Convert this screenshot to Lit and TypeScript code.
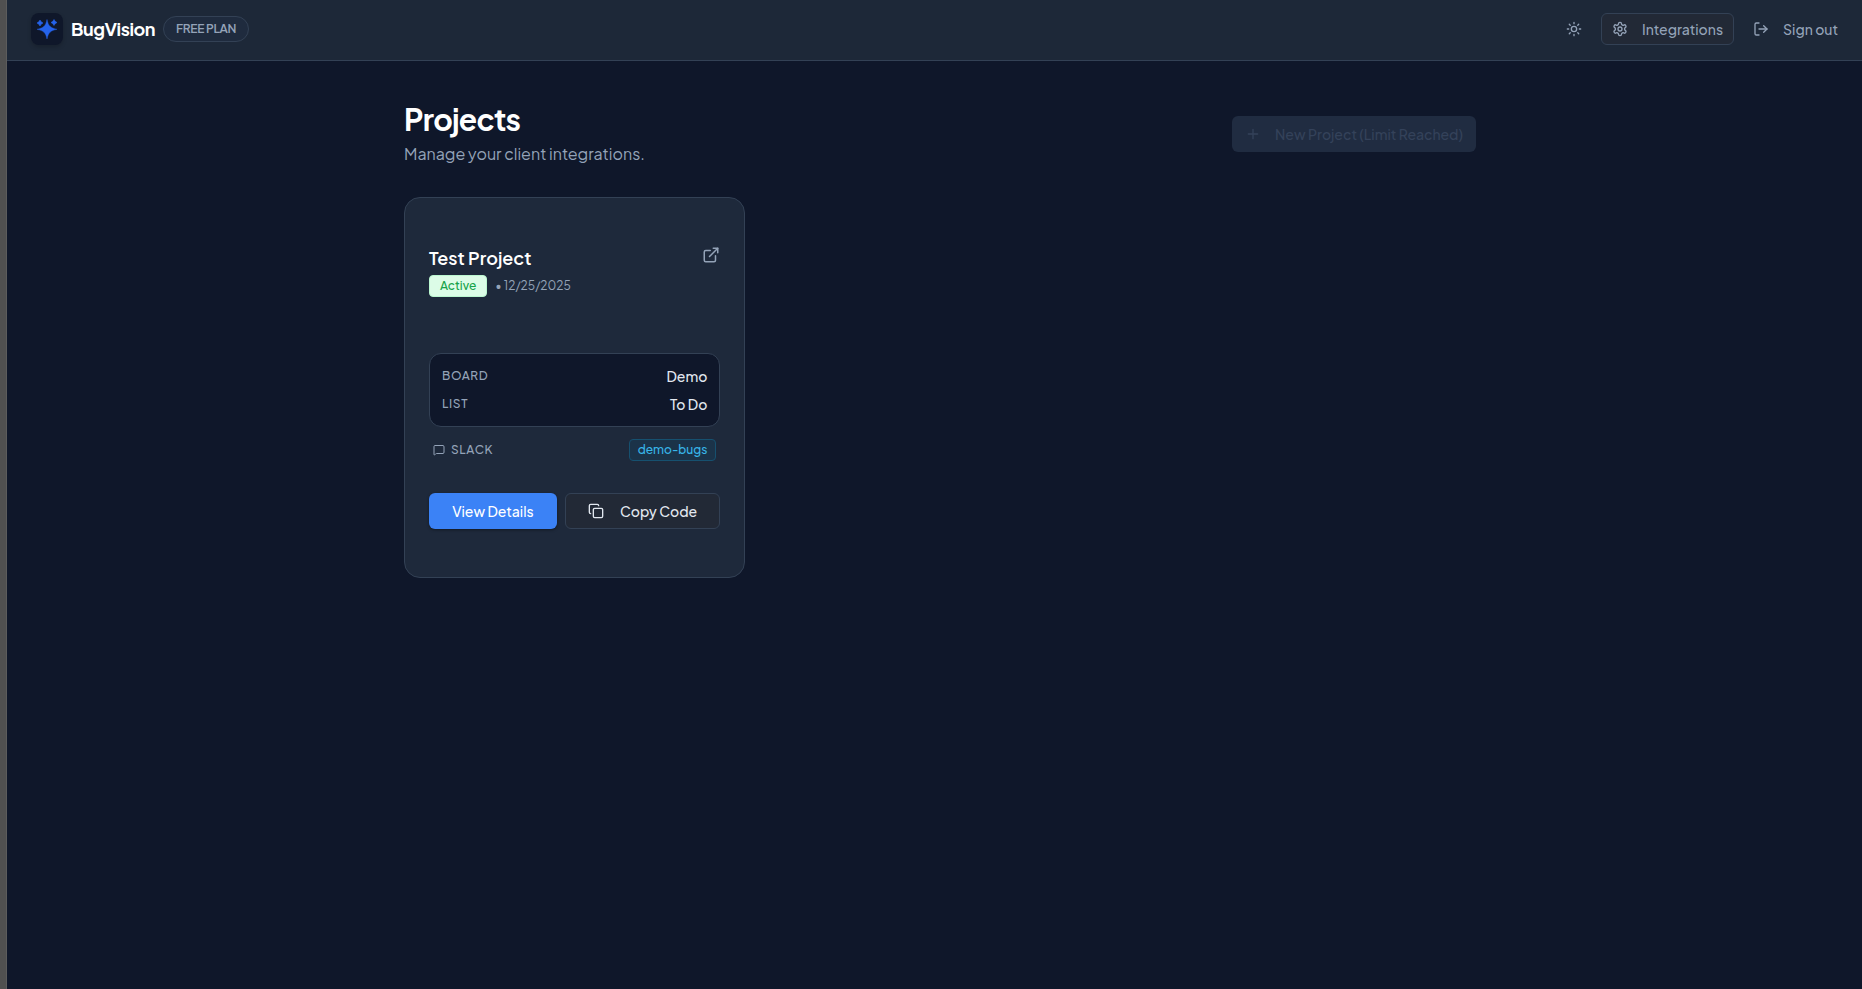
import { LitElement, html, css, svg } from "lit";
import { customElement, property } from "lit/decorators.js";

const glyphs = {
  sun: svg`<circle cx="12" cy="12" r="4"/><path d="M12 2v2M12 20v2M4.93 4.93l1.41 1.41M17.66 17.66l1.41 1.41M2 12h2M20 12h2M6.34 17.66l-1.41 1.41M19.07 4.93l-1.41 1.41"/>`,
  gear: svg`<circle cx="12" cy="12" r="3"/><path d="M12.22 2h-.44a2 2 0 0 0-2 2v.18a2 2 0 0 1-1 1.73l-.43.25a2 2 0 0 1-2 0l-.15-.08a2 2 0 0 0-2.73.73l-.22.38a2 2 0 0 0 .73 2.73l.15.1a2 2 0 0 1 1 1.72v.51a2 2 0 0 1-1 1.74l-.15.09a2 2 0 0 0-.73 2.73l.22.38a2 2 0 0 0 2.73.73l.15-.08a2 2 0 0 1 2 0l.43.25a2 2 0 0 1 1 1.73V20a2 2 0 0 0 2 2h.44a2 2 0 0 0 2-2v-.18a2 2 0 0 1 1-1.73l.43-.25a2 2 0 0 1 2 0l.15.08a2 2 0 0 0 2.73-.73l.22-.39a2 2 0 0 0-.73-2.73l-.15-.08a2 2 0 0 1-1-1.74v-.5a2 2 0 0 1 1-1.74l.15-.09a2 2 0 0 0 .73-2.73l-.22-.38a2 2 0 0 0-2.73-.73l-.15.08a2 2 0 0 1-2 0l-.43-.25a2 2 0 0 1-1-1.73V4a2 2 0 0 0-2-2z"/>`,
  exit: svg`<path d="M9 21H5a2 2 0 0 1-2-2V5a2 2 0 0 1 2-2h4"/><path d="m16 17 5-5-5-5"/><path d="M21 12H9"/>`,
  plus: svg`<path d="M5 12h14M12 5v14"/>`,
  external: svg`<path d="M15 3h6v6"/><path d="M10 14 21 3"/><path d="M18 13v6a2 2 0 0 1-2 2H5a2 2 0 0 1-2-2V8a2 2 0 0 1 2-2h6"/>`,
  message: svg`<path d="M22 17a2 2 0 0 1-2 2H6.828a2 2 0 0 0-1.414.586l-2.202 2.202A.71.71 0 0 1 2 21.286V5a2 2 0 0 1 2-2h16a2 2 0 0 1 2 2z"/>`,
  copy: svg`<rect x="8" y="8" width="14" height="14" rx="2"/><path d="M4 16c-1.1 0-2-.9-2-2V4c0-1.1.9-2 2-2h10c1.1 0 2 .9 2 2"/>`,
};

const icon = (name: keyof typeof glyphs, size = 16) => html`
  <svg width=${size} height=${size} viewBox="0 0 24 24" fill="none" stroke="currentColor"
    stroke-width="2" stroke-linecap="round" stroke-linejoin="round" aria-hidden="true">${glyphs[name]}</svg>`;

const shared = css`
  * { box-sizing: border-box; }
  h1, h2, p, dl, dd { margin: 0; }
  svg { display: block; flex: none; }
  .btn {
    display: inline-flex;
    align-items: center;
    justify-content: center;
    height: 36px;
    padding: 0 12px;
    border: 1px solid transparent;
    border-radius: 6px;
    background: transparent;
    color: #94a3b8;
    font: inherit;
    font-size: 14px;
    line-height: 20px;
    font-weight: 500;
    white-space: nowrap;
    cursor: pointer;
  }
`;

interface Project {
  name: string;
  status: string;
  created: string;
  board: string;
  list: string;
  channel: string;
}

@customElement("project-card")
export class ProjectCard extends LitElement {
  @property({ attribute: false }) project!: Project;

  static styles = [
    shared,
    css`
      :host { display: block; }
      .card {
        padding: 48px 24px;
        border: 1px solid #334155;
        border-radius: 16px;
        background: #1e293b;
      }
      .top { display: flex; justify-content: space-between; align-items: flex-start; }
      .name { margin-bottom: 5px; font-size: 18px; line-height: 24px; font-weight: 600; color: #fff; }
      .meta { display: flex; align-items: center; gap: 8px; font-size: 12px; line-height: 16px; color: #94a3b8; }
      .status {
        padding: 2px 10px;
        border: 1px solid #bbf7d0;
        border-radius: 4px;
        background: #dcfce7;
        color: #16a34a;
        font-weight: 500;
      }
      .open { color: #94a3b8; }
      .target {
        display: grid;
        gap: 8px;
        margin-top: 56px;
        padding: 12px;
        border: 1px solid #334155;
        border-radius: 12px;
        background: #0f172a;
      }
      .row { display: flex; justify-content: space-between; }
      .label {
        font-size: 12px;
        line-height: 20px;
        font-weight: 500;
        color: #94a3b8;
        text-transform: uppercase;
        letter-spacing: 0.05em;
      }
      .value { font-size: 14px; line-height: 20px; font-weight: 500; color: #e2e8f0; }
      .slack {
        display: flex;
        justify-content: space-between;
        align-items: center;
        margin-top: 12px;
        padding: 0 4px;
      }
      .source { display: flex; align-items: center; gap: 6px; }
      .channel {
        padding: 2px 8px;
        border: 1px solid #16506f;
        border-radius: 4px;
        background: #1b3349;
        color: #38b6ea;
        font-size: 12px;
        line-height: 16px;
        font-weight: 500;
      }
      .actions { display: flex; gap: 8px; margin-top: 32px; }
      .btn { flex: 1 1 auto; }
      .primary { background: #3b82f6; color: #fff; box-shadow: 0 1px 3px #0006; }
      .secondary { gap: 16px; border-color: #334155; background: #222936; color: #e2e8f0; }
    `,
  ];

  render() {
    const p = this.project;
    return html`
      <article class="card">
        <div class="top">
          <div>
            <h2 class="name">${p.name}</h2>
            <div class="meta"><span class="status">${p.status}</span><span>• ${p.created}</span></div>
          </div>
          <a class="open" href="#open" aria-label="Open project">${icon("external", 18)}</a>
        </div>
        <dl class="target">
          <div class="row"><dt class="label">Board</dt><dd class="value">${p.board}</dd></div>
          <div class="row"><dt class="label">List</dt><dd class="value">${p.list}</dd></div>
        </dl>
        <div class="slack">
          <span class="source label">${icon("message", 12)}Slack</span>
          <span class="channel">${p.channel}</span>
        </div>
        <div class="actions">
          <button class="btn primary" type="button">View Details</button>
          <button class="btn secondary" type="button">${icon("copy")}Copy Code</button>
        </div>
      </article>
    `;
  }
}

@customElement("app-root")
export class AppRoot extends LitElement {
  private projects: Project[] = [
    { name: "Test Project", status: "Active", created: "12/25/2025", board: "Demo", list: "To Do", channel: "demo-bugs" },
  ];

  static styles = [
    shared,
    css`
      :host {
        display: flex;
        min-height: 100vh;
        background: #0f172a;
        font-family: "Plus Jakarta Sans", Inter, sans-serif;
        color: #e2e8f0;
      }
      .edge { flex: none; width: 7px; background: #505050; border-right: 1px solid #5c5c5c; }
      .page { flex: 1; min-width: 0; }
      .header {
        display: flex;
        justify-content: space-between;
        align-items: flex-start;
        padding: 13px 13px 15px 24px;
        border-bottom: 1px solid #334155;
        background: #1d2838;
      }
      .brand, .nav { display: flex; align-items: center; gap: 8px; height: 32px; }
      .logo {
        display: grid;
        place-items: center;
        width: 32px;
        height: 32px;
        border-radius: 8px;
        background: #0f172a;
        box-shadow: 0 2px 4px #0003;
      }
      .title { font-size: 18px; line-height: 28px; font-weight: 700; letter-spacing: -0.025em; color: #fff; }
      .plan {
        padding: 4px 12px;
        border: 1px solid #334155;
        border-radius: 13px;
        color: #94a3b8;
        background: #1f2b3e;
        font-size: 12px;
        line-height: 16px;
        font-weight: 600;
        letter-spacing: -0.025em;
      }
      .nav .btn { height: 32px; gap: 14px; padding: 0 10px; }
      .nav .boxed { border-color: #334155; background: #222936; }
      .main { padding: 40px 0 40px 11px; }
      .container { max-width: 1120px; margin: 0 auto; padding: 0 24px; }
      .heading { display: flex; justify-content: space-between; align-items: center; margin-bottom: 31px; }
      .h1 { font-size: 30px; line-height: 36px; font-weight: 700; letter-spacing: -0.025em; color: #fff; }
      .sub { font-size: 16px; line-height: 24px; margin-top: 5px; color: #94a3b8; }
      .new { gap: 14px; background: #202c41; color: #34425a; cursor: not-allowed; }
      .grid { display: grid; grid-template-columns: repeat(3, minmax(0, 1fr)); gap: 24px; }
    `,
  ];

  render() {
    return html`
      <div class="edge"></div>
      <div class="page">
        <header class="header">
          <div class="brand">
            <span class="logo">
              <svg width="22" height="22" viewBox="0 0 22 22" fill="#2563eb" aria-hidden="true">
                <path d="M11 1.500C11.700 5 12.600 7 14 8.300C15.400 9.700 17.500 10.600 21 11.300C17.500 12 15.400 12.900 14 14.300C12.600 15.700 11.700 17.600 11 21C10.300 17.600 9.400 15.700 8 14.300C6.600 12.900 4.500 12 1 11.300C4.500 10.600 6.600 9.700 8 8.300C9.400 7 10.300 5 11 1.500Z" stroke="#2563eb" stroke-width=".4"/>
                <path d="M4 2Q4.800 4.200 7 5Q4.800 5.800 4 8Q3.200 5.800 1 5Q3.200 4.200 4 2Z" stroke="#2563eb" stroke-width=".6"/>
                <path d="M18 1.500Q18.800 3.700 21 4.500Q18.800 5.300 18 7.500Q17.200 5.300 15 4.500Q17.200 3.700 18 1.500Z" stroke="#2563eb" stroke-width=".6"/>
              </svg>
            </span>
            <span class="title">BugVision</span>
            <span class="plan">FREE PLAN</span>
          </div>
          <nav class="nav">
            <button class="btn" type="button" aria-label="Toggle theme">${icon("sun")}</button>
            <button class="btn boxed" type="button">${icon("gear")}Integrations</button>
            <button class="btn" type="button">${icon("exit")}Sign out</button>
          </nav>
        </header>
        <main class="main">
          <div class="container">
            <div class="heading">
              <div>
                <h1 class="h1">Projects</h1>
                <p class="sub">Manage your client integrations.</p>
              </div>
              <button class="btn new" type="button" disabled>${icon("plus")}New Project (Limit Reached)</button>
            </div>
            <div class="grid">
              ${this.projects.map((p) => html`<project-card .project=${p}></project-card>`)}
            </div>
          </div>
        </main>
      </div>
    `;
  }
}
